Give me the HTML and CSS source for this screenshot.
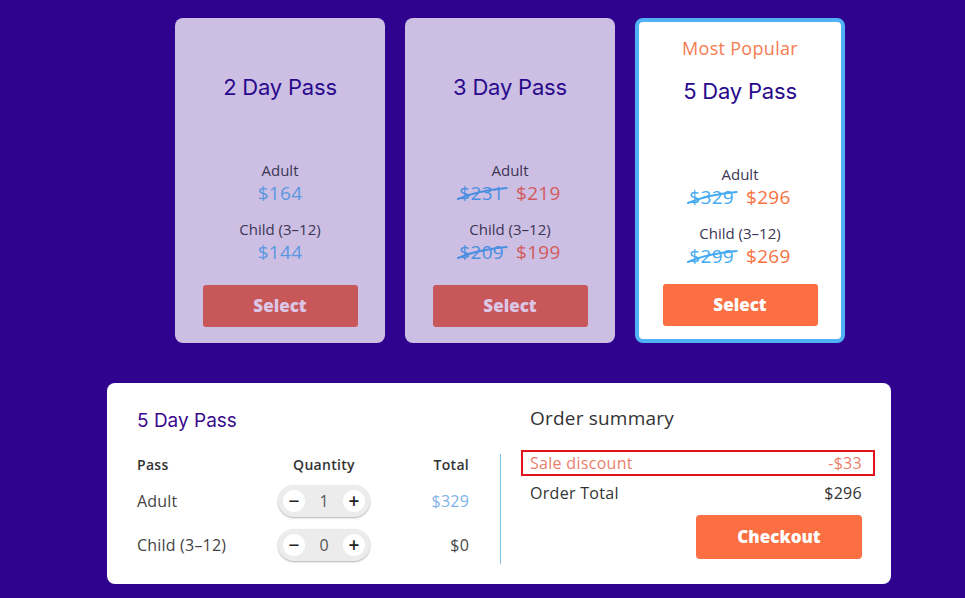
FILE: index.html
```html
<!DOCTYPE html>
<html lang="en">
<head>
<meta charset="utf-8">
<title>Passes</title>
<link rel="stylesheet" href="styles.css">
</head>
<body>
<main class="page">
  <section class="cards">
    <article class="card">
      <div class="card-label card-label--empty">Most Popular</div>
      <h2 class="card-title">2 Day Pass</h2>
      <div class="prices">
        <div class="price-type">Adult</div>
        <div class="price-line"><span class="price price--plain">$164</span></div>
        <div class="price-type price-type--child">Child (3–12)</div>
        <div class="price-line"><span class="price price--plain">$144</span></div>
      </div>
      <button class="select select--muted">Select</button>
    </article>
    <article class="card">
      <div class="card-label card-label--empty">Most Popular</div>
      <h2 class="card-title">3 Day Pass</h2>
      <div class="prices">
        <div class="price-type">Adult</div>
        <div class="price-line">
          <span class="price price--old price--old-dark">$231<svg class="strike" viewBox="0 0 50 14" preserveAspectRatio="none"><path d="M1 13 C 12 8, 28 4, 49 2"/></svg></span>
          <span class="price price--sale">$219</span>
        </div>
        <div class="price-type price-type--child">Child (3–12)</div>
        <div class="price-line">
          <span class="price price--old price--old-dark">$209<svg class="strike" viewBox="0 0 50 14" preserveAspectRatio="none"><path d="M1 13 C 12 8, 28 4, 49 2"/></svg></span>
          <span class="price price--sale">$199</span>
        </div>
      </div>
      <button class="select select--muted">Select</button>
    </article>
    <article class="card card--popular">
      <div class="card-label">Most Popular</div>
      <h2 class="card-title">5 Day Pass</h2>
      <div class="prices">
        <div class="price-type">Adult</div>
        <div class="price-line">
          <span class="price price--old">$329<svg class="strike" viewBox="0 0 50 14" preserveAspectRatio="none"><path d="M1 13 C 12 8, 28 4, 49 2"/></svg></span>
          <span class="price price--hot">$296</span>
        </div>
        <div class="price-type price-type--child">Child (3–12)</div>
        <div class="price-line">
          <span class="price price--old">$299<svg class="strike" viewBox="0 0 50 14" preserveAspectRatio="none"><path d="M1 13 C 12 8, 28 4, 49 2"/></svg></span>
          <span class="price price--hot">$269</span>
        </div>
      </div>
      <button class="select select--hot">Select</button>
    </article>
  </section>

  <section class="order">
    <div class="order-left">
      <h3 class="order-title">5 Day Pass</h3>
      <div class="qty-table">
        <div class="th">Pass</div>
        <div class="th th--center">Quantity</div>
        <div class="th th--right">Total</div>

        <div class="td">Adult</div>
        <div class="stepper"><span class="step-btn">−</span><span class="step-val">1</span><span class="step-btn">+</span></div>
        <div class="td td--right td--blue">$329</div>

        <div class="td">Child (3–12)</div>
        <div class="stepper"><span class="step-btn">−</span><span class="step-val">0</span><span class="step-btn">+</span></div>
        <div class="td td--right">$0</div>
      </div>
    </div>
    <div class="divider"></div>
    <div class="order-right">
      <h3 class="summary-title">Order summary</h3>
      <div class="sum-row sum-row--discount"><span>Sale discount</span><span>-$33</span></div>
      <div class="sum-row"><span>Order Total</span><span>$296</span></div>
      <div class="checkout-wrap"><button class="checkout">Checkout</button></div>
    </div>
  </section>
</main>
</body>
</html>
```

FILE: styles.css
```css
* { box-sizing: border-box; }
html, body { margin: 0; padding: 0; }
body {
  background: #30038f;
  font-family: "Open Sans", "Noto Sans", sans-serif;
  color: #3a3550;
  width: 965px;
  height: 598px;
  overflow: hidden;
}
.page {
  padding-top: 18px;
}
.cards {
  display: flex;
  gap: 20px;
  margin-left: 175px;
}
.card {
  width: 210px;
  height: 325px;
  background: #cdbfe3;
  border-radius: 8px;
  padding: 14px 27px 16px;
  display: flex;
  flex-direction: column;
  align-items: center;
  text-align: center;
}
.card--popular {
  background: #fff;
  border: 4px solid #4fb2f6;
  padding: 14px 23px 13px;
}
.card-label {
  font-size: 18px;
  line-height: 24px;
  color: #f47c52;
  letter-spacing: 0.3px;
}
.card-label--empty { visibility: hidden; }
.card-title {
  margin: 16px 0 0;
  font-family: "Inter", sans-serif;
  font-weight: 400;
  font-size: 22px;
  line-height: 30px;
  color: #2a0a8c;
  letter-spacing: -0.2px;
}
.prices {
  margin-top: 58px;
  width: 100%;
}
.price-type {
  font-size: 15px;
  line-height: 20px;
  color: #3b3654;
}
.price-type--child { margin-top: 13px; }
.price-line {
  display: flex;
  justify-content: center;
  gap: 12px;
  line-height: 26px;
  height: 26px;
}
.price {
  font-size: 19px;
  position: relative;
  letter-spacing: 0.3px;
}
.price--plain { color: #5b98e2; }
.price--old { color: #45aaf0; }
.price--old-dark { color: #4a8ee2; }
.price--sale { color: #d25a5c; }
.price--hot { color: #f7713f; }
.strike {
  position: absolute;
  left: -2px;
  top: 6px;
  width: calc(100% + 6px);
  height: 14px;
  overflow: visible;
}
.strike path {
  fill: none;
  stroke: currentColor;
  stroke-width: 2;
  stroke-linecap: round;
}
.select {
  margin-top: auto;
  width: 155px;
  height: 42px;
  border: 0;
  border-radius: 3px;
  font-family: "Open Sans", sans-serif;
  font-weight: 800;
  font-size: 17px;
  line-height: 40px;
  cursor: pointer;
}
.select--muted {
  background: #c8575a;
  color: #dcc6e6;
}
.select--hot {
  background: #fb6f42;
  color: #fff;
}

.order {
  margin: 40px 0 0 107px;
  width: 784px;
  height: 201px;
  background: #fff;
  border-radius: 8px;
  display: flex;
  padding: 0 29px 0 30px;
}
.order-left {
  width: 332px;
  padding-top: 26px;
}
.order-title {
  margin: 0;
  font-family: "Inter", sans-serif;
  font-weight: 400;
  font-size: 19px;
  line-height: 24px;
  color: #3a0a8c;
}
.qty-table {
  margin-top: 22px;
  display: grid;
  grid-template-columns: 141px 92px 1fr;
  grid-template-rows: 18px 32px 32px;
  row-gap: 12px;
  align-items: center;
}
.th {
  font-size: 14px;
  font-weight: 600;
  color: #333;
  letter-spacing: 0.3px;
}
.th--center { text-align: center; }
.th--right, .td--right { text-align: right; }
.td {
  font-size: 16px;
  color: #444;
  letter-spacing: 0.2px;
}
.td--blue { color: #7fb2e8; }
.stepper {
  height: 32px;
  border-radius: 16px;
  background: #ececec;
  box-shadow: 0 1px 2px rgba(0,0,0,0.3);
  display: flex;
  align-items: center;
  justify-content: space-between;
  padding: 0 5px;
}
.step-btn {
  width: 22px;
  height: 22px;
  border-radius: 50%;
  background: #fff;
  display: flex;
  align-items: center;
  justify-content: center;
  font-size: 19px;
  font-weight: 600;
  line-height: 1;
  color: #222;
}
.step-val {
  font-size: 16px;
  color: #555;
}
.divider {
  width: 1px;
  height: 110px;
  background: #7ec0e2;
  margin: 71px 29px 0 31px;
}
.order-right {
  flex: 1;
  padding-top: 23px;
}
.summary-title {
  margin: 0 0 20px;
  font-weight: 400;
  font-size: 19px;
  line-height: 24px;
  color: #333;
  letter-spacing: 0.2px;
}
.sum-row {
  display: flex;
  justify-content: space-between;
  font-size: 16px;
  line-height: 22px;
  color: #333;
  letter-spacing: 0.3px;
}
.sum-row--discount {
  position: relative;
  line-height: 26px;
  color: #e9806c;
  margin-bottom: 6px;
}
.sum-row--discount::before {
  content: "";
  position: absolute;
  left: -9px;
  right: -13px;
  top: 0;
  bottom: 0;
  border: 2px solid #e2121b;
}
.checkout-wrap {
  display: flex;
  justify-content: flex-end;
  margin-top: 11px;
}
.checkout {
  width: 166px;
  height: 44px;
  border: 0;
  border-radius: 4px;
  background: #fb6f42;
  color: #fff;
  font-family: "Open Sans", sans-serif;
  font-weight: 800;
  font-size: 17px;
  line-height: 40px;
}
```
